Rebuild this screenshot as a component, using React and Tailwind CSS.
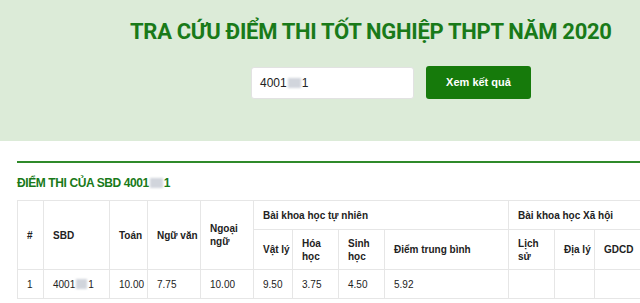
import React from "react";

const Masked = ({ w = "w-[13px]" }) => (
  <span className={`inline-block ${w} h-[10px] bg-gray-300 blur-[1px] align-[-1px] mx-[1px]`} />
);

const th = "border border-[#e6e6e6] pl-[9px] pr-[2px] text-left font-bold align-middle";
const td = "border border-[#e6e6e6] pl-[9px] pr-[2px] align-middle";

const App = () => {
  return (
    <div className="w-[640px] h-[303px] overflow-hidden bg-white text-[#222] font-['Liberation_Sans',Arial,sans-serif]">
      <div className="bg-[#dcebd8] h-[141px] pt-[19px]">
        <h1 className="pl-[130px] text-[22px] leading-[26px] font-bold text-[#197a19] whitespace-nowrap tracking-[-0.3px] font-['Roboto',sans-serif]">
          TRA CỨU ĐIỂM THI TỐT NGHIỆP THPT NĂM 2020
        </h1>
        <div className="flex items-center pl-[251px] mt-[21px] gap-[12px]">
          <div className="w-[163px] h-[32px] bg-white rounded-[3px] border border-[#e2e2e2] flex items-center px-[8px] text-[12px]">
            4001<Masked />1
          </div>
          <button className="w-[105px] h-[33px] bg-[#167a0b] rounded-[3px] text-white text-[11px] font-bold">
            Xem kết quả
          </button>
        </div>
      </div>
      <div className="pl-[17px] pt-[20px]">
        <div className="h-[2px] bg-[#2f8a2a]" />
        <h2 className="mt-[12px] text-[12px] leading-[16px] font-bold text-[#197a19] tracking-[-0.4px]">
          ĐIỂM THI CỦA SBD 4001<Masked />1
        </h2>
        <table className="mt-[9px] border-collapse text-[10px] leading-[13px] w-[700px] table-fixed">
          <colgroup>
            <col className="w-[26px]" />
            <col className="w-[66px]" />
            <col className="w-[38px]" />
            <col className="w-[53px]" />
            <col className="w-[53px]" />
            <col className="w-[39px]" />
            <col className="w-[46px]" />
            <col className="w-[46px]" />
            <col className="w-[124px]" />
            <col className="w-[46px]" />
            <col className="w-[40px]" />
            <col className="w-[123px]" />
          </colgroup>
          <thead>
            <tr className="h-[29px]">
              <th rowSpan={2} className={th}>#</th>
              <th rowSpan={2} className={th}>SBD</th>
              <th rowSpan={2} className={th}>Toán</th>
              <th rowSpan={2} className={th}>Ngữ văn</th>
              <th rowSpan={2} className={th}>Ngoại ngữ</th>
              <th colSpan={4} className={th}>Bài khoa học tự nhiên</th>
              <th colSpan={3} className={th}>Bài khoa học Xã hội</th>
            </tr>
            <tr className="h-[40px]">
              <th className={th}>Vật lý</th>
              <th className={th}>Hóa học</th>
              <th className={th}>Sinh học</th>
              <th className={th}>Điểm trung bình</th>
              <th className={th}>Lịch sử</th>
              <th className={th}>Địa lý</th>
              <th className={th}>GDCD</th>
            </tr>
          </thead>
          <tbody>
            <tr className="h-[29px]">
              <td className={td}>1</td>
              <td className={td}>4001<Masked w="w-[11px]" />1</td>
              <td className={td}>10.00</td>
              <td className={td}>7.75</td>
              <td className={td}>10.00</td>
              <td className={td}>9.50</td>
              <td className={td}>3.75</td>
              <td className={td}>4.50</td>
              <td className={td}>5.92</td>
              <td className={td}></td>
              <td className={td}></td>
              <td className={td}></td>
            </tr>
          </tbody>
        </table>
      </div>
    </div>
  );
};

export default App;
